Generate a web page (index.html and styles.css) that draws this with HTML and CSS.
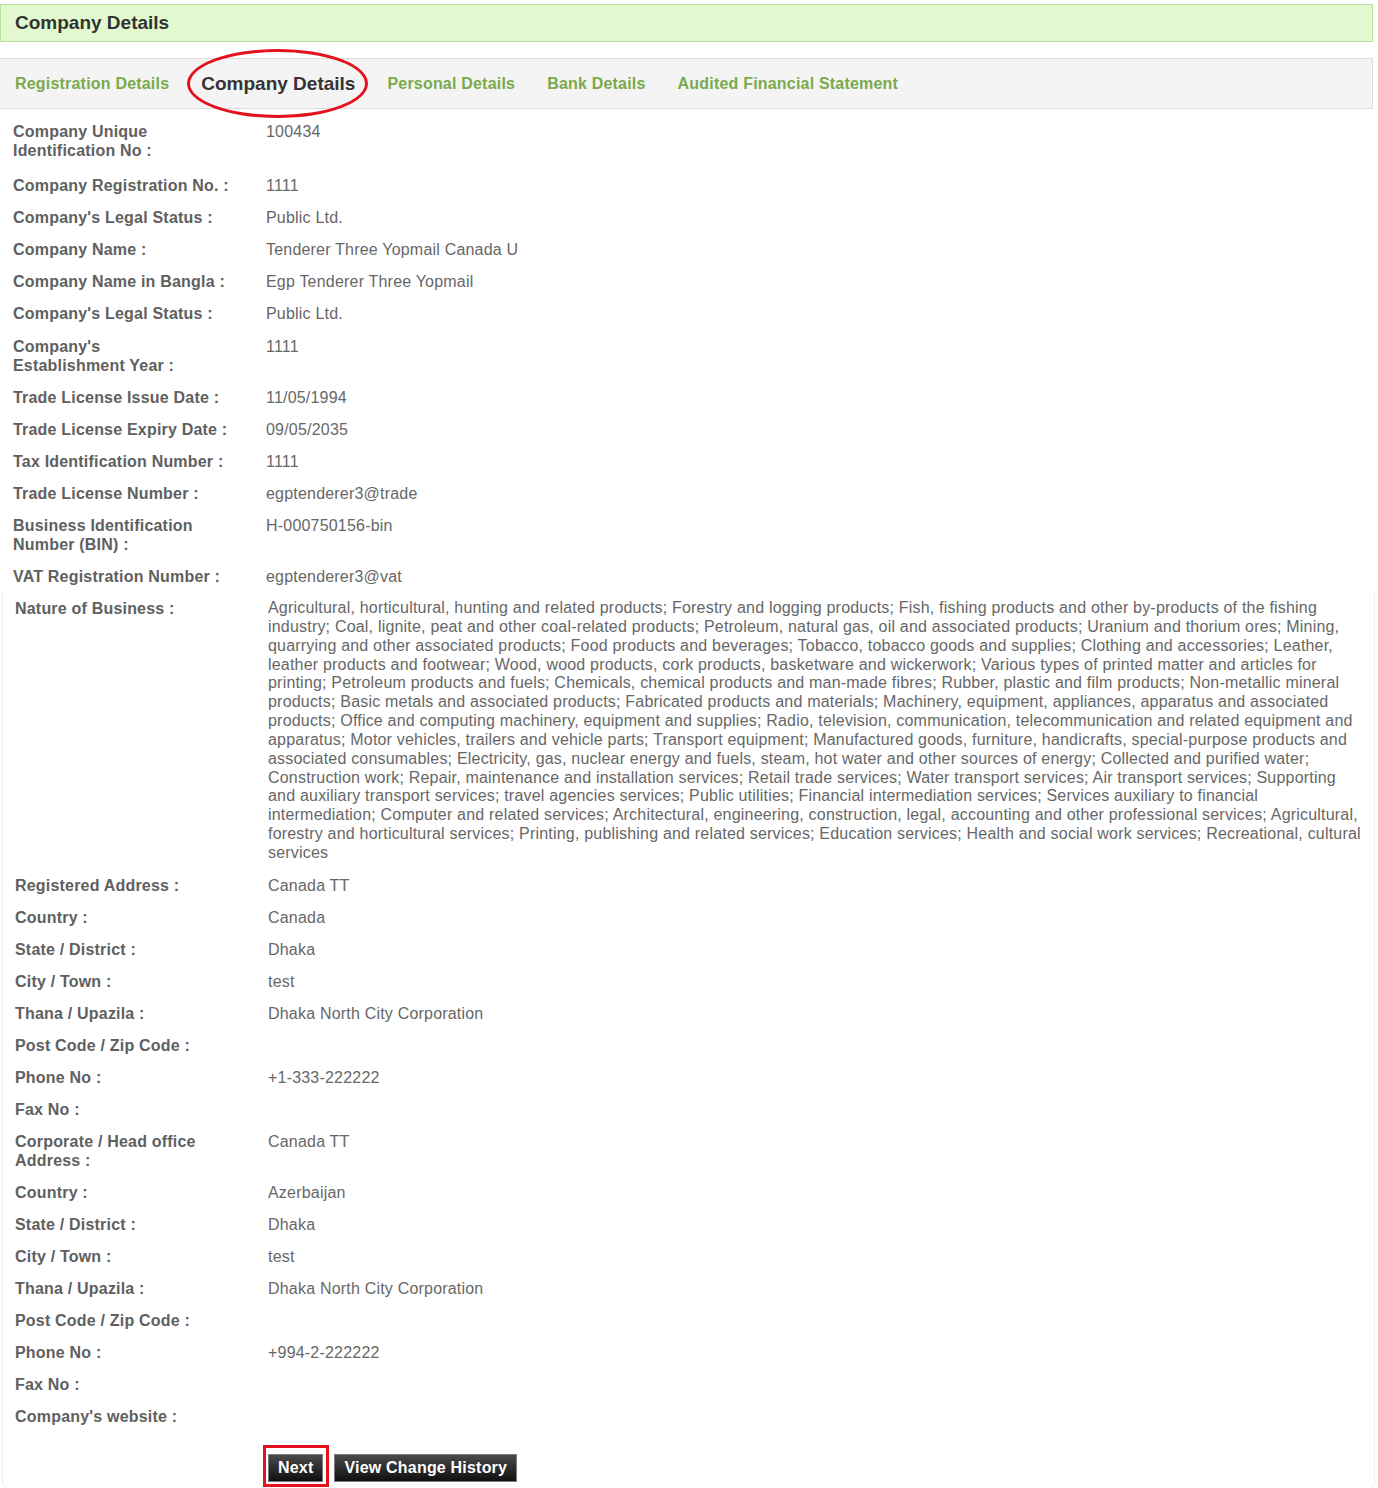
FILE: index.html
```html
<!DOCTYPE html>
<html lang="en">
<head>
<meta charset="utf-8">
<title>Company Details</title>
<link rel="stylesheet" href="styles.css">
</head>
<body>
<div class="page">
  <div class="page-title">Company Details</div>

  <div class="tabs">
    <a class="tab">Registration Details</a>
    <span class="tab tab-active">Company Details</span>
    <a class="tab">Personal Details</a>
    <a class="tab">Bank Details</a>
    <a class="tab">Audited Financial Statement</a>
  </div>

  <table class="info info-top">
    <tr class="first"><td class="lbl">Company Unique<br>Identification No :</td><td class="val">100434</td></tr>
    <tr><td class="lbl">Company Registration No. :</td><td class="val">1111</td></tr>
    <tr><td class="lbl">Company's Legal Status :</td><td class="val">Public Ltd.</td></tr>
    <tr><td class="lbl">Company Name :</td><td class="val">Tenderer Three Yopmail Canada U</td></tr>
    <tr><td class="lbl">Company Name in Bangla :</td><td class="val">Egp Tenderer Three Yopmail</td></tr>
    <tr><td class="lbl">Company's Legal Status :</td><td class="val">Public Ltd.</td></tr>
    <tr class="est"><td class="lbl">Company's<br>Establishment Year :</td><td class="val">1111</td></tr>
    <tr><td class="lbl">Trade License Issue Date :</td><td class="val">11/05/1994</td></tr>
    <tr><td class="lbl">Trade License Expiry Date :</td><td class="val">09/05/2035</td></tr>
    <tr><td class="lbl">Tax Identification Number :</td><td class="val">1111</td></tr>
    <tr><td class="lbl">Trade License Number :</td><td class="val">egptenderer3@trade</td></tr>
    <tr><td class="lbl">Business Identification<br>Number (BIN) :</td><td class="val">H-000750156-bin</td></tr>
    <tr><td class="lbl">VAT Registration Number :</td><td class="val">egptenderer3@vat</td></tr>
  </table>

  <table class="info info-bottom">
    <tr class="nature"><td class="lbl">Nature of Business :</td><td class="val">Agricultural, horticultural, hunting and related products; Forestry and logging products; Fish, fishing products and other by-products of the fishing industry; Coal, lignite, peat and other coal-related products; Petroleum, natural gas, oil and associated products; Uranium and thorium ores; Mining, quarrying and other associated products; Food products and beverages; Tobacco, tobacco goods and supplies; Clothing and accessories; Leather, leather products and footwear; Wood, wood products, cork products, basketware and wickerwork; Various types of printed matter and articles for printing; Petroleum products and fuels; Chemicals, chemical products and man-made fibres; Rubber, plastic and film products; Non-metallic mineral products; Basic metals and associated products; Fabricated products and materials; Machinery, equipment, appliances, apparatus and associated products; Office and computing machinery, equipment and supplies; Radio, television, communication, telecommunication and related equipment and apparatus; Motor vehicles, trailers and vehicle parts; Transport equipment; Manufactured goods, furniture, handicrafts, special-purpose products and associated consumables; Electricity, gas, nuclear energy and fuels, steam, hot water and other sources of energy; Collected and purified water; Construction work; Repair, maintenance and installation services; Retail trade services; Water transport services; Air transport services; Supporting and auxiliary transport services; travel agencies services; Public utilities; Financial intermediation services; Services auxiliary to financial intermediation; Computer and related services; Architectural, engineering, construction, legal, accounting and other professional services; Agricultural, forestry and horticultural services; Printing, publishing and related services; Education services; Health and social work services; Recreational, cultural services</td></tr>
    <tr><td class="lbl">Registered Address :</td><td class="val">Canada TT</td></tr>
    <tr><td class="lbl">Country :</td><td class="val">Canada</td></tr>
    <tr><td class="lbl">State / District :</td><td class="val">Dhaka</td></tr>
    <tr><td class="lbl">City / Town :</td><td class="val">test</td></tr>
    <tr><td class="lbl">Thana / Upazila :</td><td class="val">Dhaka North City Corporation</td></tr>
    <tr><td class="lbl">Post Code / Zip Code :</td><td class="val"></td></tr>
    <tr><td class="lbl">Phone No :</td><td class="val">+1-333-222222</td></tr>
    <tr><td class="lbl">Fax No :</td><td class="val"></td></tr>
    <tr><td class="lbl">Corporate / Head office<br>Address :</td><td class="val">Canada TT</td></tr>
    <tr><td class="lbl">Country :</td><td class="val">Azerbaijan</td></tr>
    <tr><td class="lbl">State / District :</td><td class="val">Dhaka</td></tr>
    <tr><td class="lbl">City / Town :</td><td class="val">test</td></tr>
    <tr><td class="lbl">Thana / Upazila :</td><td class="val">Dhaka North City Corporation</td></tr>
    <tr><td class="lbl">Post Code / Zip Code :</td><td class="val"></td></tr>
    <tr><td class="lbl">Phone No :</td><td class="val">+994-2-222222</td></tr>
    <tr><td class="lbl">Fax No :</td><td class="val"></td></tr>
    <tr><td class="lbl">Company's website :</td><td class="val"></td></tr>
    <tr class="actions">
      <td class="lbl"></td>
      <td class="val">
        <div class="btn-row">
          <span class="highlight"><button class="btn" type="button">Next</button></span>
          <button class="btn" type="button">View Change History</button>
        </div>
      </td>
    </tr>
  </table>
</div>
</body>
</html>
```

FILE: styles.css
```css
html, body {
  margin: 0;
  padding: 0;
  background: #ffffff;
}

body {
  font-family: "Liberation Sans", Arial, sans-serif;
  font-size: 16px;
  letter-spacing: 0.2px;
  color: #666666;
}

.page {
  width: 1373px;
  padding-top: 4px;
}

.page-title {
  box-sizing: border-box;
  height: 38px;
  background: #e2f9cf;
  border: 1px solid #b6e39c;
  padding: 0 0 0 14px;
  font-size: 19px;
  letter-spacing: 0;
  font-weight: bold;
  color: #333333;
  line-height: 36px;
}

.tabs {
  box-sizing: border-box;
  margin-top: 16px;
  height: 51px;
  background: #f4f4f4;
  border-top: 1px solid #dddddd;
  border-bottom: 1px solid #dddddd;
  border-right: 1px solid #dddddd;
  display: flex;
  align-items: center;
  padding-left: 15px;
  padding-top: 1px;
  gap: 32px;
}

.tab {
  font-size: 16px;
  font-weight: bold;
  color: #79aa4b;
  text-decoration: none;
  line-height: 20px;
}

.tab-active {
  position: relative;
  font-size: 19px;
  letter-spacing: 0;
  color: #333333;
}

.tab-active::after {
  content: "";
  position: absolute;
  left: -14px;
  right: -13px;
  top: -25px;
  bottom: -24px;
  border: 3px solid #e3121d;
  border-radius: 50%;
}

.info {
  border-collapse: collapse;
  border-spacing: 0;
}

.info td {
  padding: 7px 0 6px 0;
  line-height: 19px;
  vertical-align: top;
}

.info .lbl {
  font-weight: bold;
  color: #606060;
}

.info .val {
  color: #676767;
}

.info-top {
  margin-top: 6px;
  width: 1373px;
}

.info-top .lbl {
  width: 253px;
  padding-left: 13px;
}

.info-top tr.first td {
  padding-bottom: 9px;
}

.info-top tr.est td {
  padding-top: 8px;
}

.info-bottom {
  margin-left: 2px;
  width: 1373px;
  border-left: 1px solid #eeeeee;
  border-right: 1px solid #eeeeee;
  border-bottom: 1px solid #eeeeee;
  border-collapse: separate;
  border-radius: 0 0 6px 6px;
}

.info-bottom .lbl {
  width: 253px;
  padding-left: 12px;
}

.info-bottom .val {
  padding-right: 13px;
}

.info-bottom tr.nature td.val {
  line-height: 18.85px;
}

.info-bottom tr.actions td {
  padding-top: 22px;
  padding-bottom: 6px;
}

.btn-row {
  display: flex;
  align-items: center;
  gap: 11px;
}

.highlight {
  position: relative;
  display: inline-flex;
}

.highlight::after {
  content: "";
  position: absolute;
  left: -5px;
  right: -6px;
  top: -9px;
  bottom: -5px;
  border: 3px solid #e3121d;
  pointer-events: none;
}

.btn {
  height: 28px;
  box-sizing: border-box;
  padding: 0 9px;
  margin: 0;
  border: 1px solid #7a7a7a;
  background: linear-gradient(#4a4a4a, #101010);
  color: #ffffff;
  font-family: "Liberation Sans", Arial, sans-serif;
  font-size: 16px;
  letter-spacing: 0.2px;
  font-weight: bold;
  line-height: 26px;
  cursor: pointer;
}
```
